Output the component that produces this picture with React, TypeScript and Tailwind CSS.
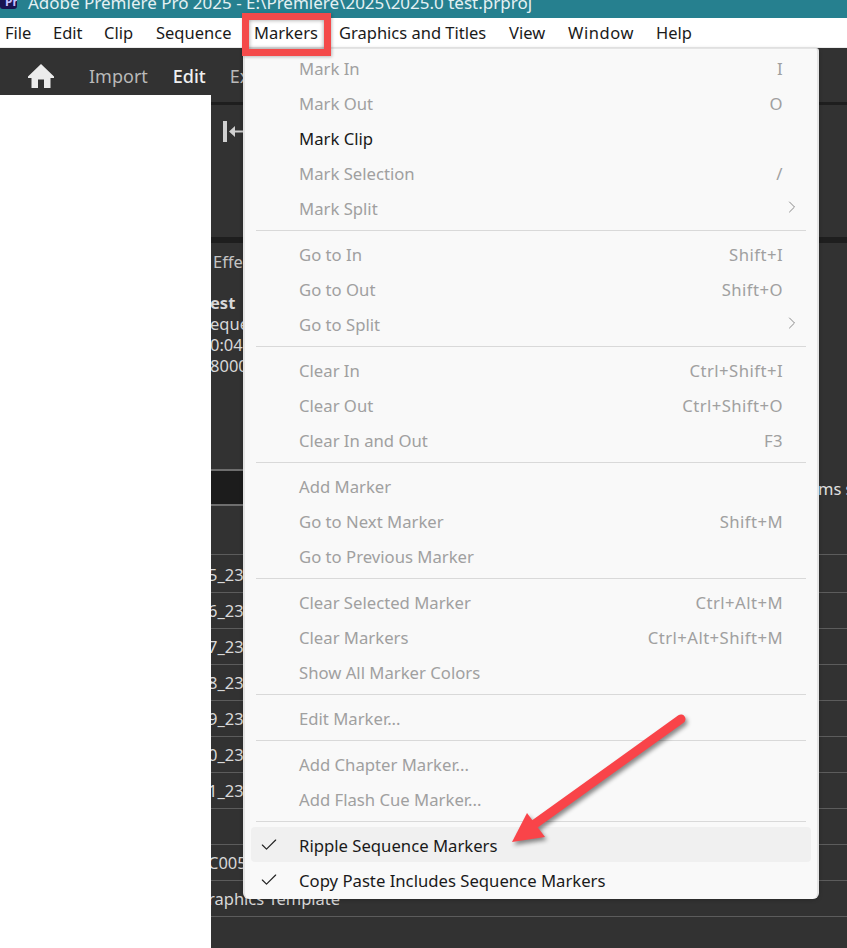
import { Check, ChevronRight } from 'lucide-react'

type Item = { label: string; shortcut?: string; sub?: boolean; on?: boolean }

const menuGroups: Item[][] = [
  [
    { label: 'Mark In', shortcut: 'I' },
    { label: 'Mark Out', shortcut: 'O' },
    { label: 'Mark Clip', on: true },
    { label: 'Mark Selection', shortcut: '/' },
    { label: 'Mark Split', sub: true },
  ],
  [
    { label: 'Go to In', shortcut: 'Shift+I' },
    { label: 'Go to Out', shortcut: 'Shift+O' },
    { label: 'Go to Split', sub: true },
  ],
  [
    { label: 'Clear In', shortcut: 'Ctrl+Shift+I' },
    { label: 'Clear Out', shortcut: 'Ctrl+Shift+O' },
    { label: 'Clear In and Out', shortcut: 'F3' },
  ],
  [
    { label: 'Add Marker' },
    { label: 'Go to Next Marker', shortcut: 'Shift+M' },
    { label: 'Go to Previous Marker' },
  ],
  [
    { label: 'Clear Selected Marker', shortcut: 'Ctrl+Alt+M' },
    { label: 'Clear Markers', shortcut: 'Ctrl+Alt+Shift+M' },
    { label: 'Show All Marker Colors' },
  ],
  [{ label: 'Edit Marker...' }],
  [{ label: 'Add Chapter Marker...' }, { label: 'Add Flash Cue Marker...' }],
]

const rows = ['5_23', '6_23', '7_23', '8_23', '9_23', '0_23', '1_23', '', 'C005', 'raphics Template']

function MenuRow({ item }: { item: Item }) {
  return (
    <div className={`h-[35px] flex items-center pl-[54px] pr-[34px] pb-[2px] ${item.on ? 'text-[#1a1a1a]' : 'text-[#a0a0a0]'}`}>
      <span>{item.label}</span>
      {item.shortcut && <span className="ml-auto tracking-[0.45px]">{item.shortcut}</span>}
      {item.sub && <ChevronRight className="ml-auto -mr-[19px] -mt-[3px] text-[#8a8a8a]" size={20} strokeWidth={1.2} />}
    </div>
  )
}

function CheckedRow({ label, hover }: { label: string; hover?: boolean }) {
  return (
    <div className={`h-[35px] flex items-center pt-[3px] mx-[6px] pl-[8px] rounded-[4px] text-[#1a1a1a] ${hover ? 'bg-[#f0f0f0]' : ''}`}>
      <Check size={20} strokeWidth={1.4} className="text-[#222] -mt-[3px]" />
      <span className="ml-[20px]">{label}</span>
    </div>
  )
}

function Menu() {
  return (
    <div className="absolute z-20 left-[243px] top-[48px] w-[576px] h-[851px] pt-[3px] bg-[#f9f9f9] border-t border-x-2 border-[#e4e4e4] rounded-b-[6px] rounded-tr-[3px] text-[16.7px] shadow-[0_1px_4px_rgba(0,0,0,0.2)]">
      {menuGroups.map((group, i) => (
        <div key={i}>
          {group.map((item) => (
            <MenuRow key={item.label} item={item} />
          ))}
          {/* separators are 11px, the last one is a bit tighter */}
          <div className={`${i === menuGroups.length - 1 ? 'h-[9px]' : 'h-[11px]'} flex items-start pt-[3px]`}>
            <div className="ml-[11px] h-px w-[550px] bg-[#d9d9d9]" />
          </div>
        </div>
      ))}
      <CheckedRow label="Ripple Sequence Markers" hover />
      <CheckedRow label="Copy Paste Includes Sequence Markers" />
    </div>
  )
}

function BehindPanel() {
  return (
    <div className="flex-1 flex flex-col overflow-hidden text-[#d8d8d8] text-[16.5px] leading-[21px]">
      <div className="h-[7px] shrink-0" />
      <div className="h-[3px] shrink-0 bg-[#1e1e1e]" />
      <div className="h-[132px] shrink-0 pl-[12px] pt-[16px]">
        <svg width="22" height="21" viewBox="0 0 22 21" fill="#d0d0d0">
          <rect x="0" y="0" width="4" height="21" />
          <path d="M6 10.5L12 5V9.5H22V11.5H12V16Z" />
        </svg>
      </div>
      <div className="h-[6px] shrink-0 bg-[#1e1e1e]" />
      <div className="h-[226px] shrink-0 pt-[8px] pl-[2px]">
        <div className="text-[#c4c4c4]">Effects</div>
        <div className="mt-[20px] -ml-[3px] font-bold">est</div>
        <div className="-ml-[3px]">equence</div>
        <div className="-ml-[3px]">0:04</div>
        <div className="-ml-[3px]">8000</div>
      </div>
      {/* the dark header strip only shows left of the menu */}
      <div className="h-[37px] shrink-0 flex">
        <div className="w-[40px] bg-[#1c1c1c] border-y-2 border-[#6e6e6e]" />
        <span className="ml-auto w-[29px] pt-[9px] shrink-0 whitespace-nowrap overflow-hidden text-[#e0e0e0]">ms s</span>
      </div>
      <div className="h-[49px] shrink-0 border-b border-[#5c5c5c]" />
      <div className="h-[38px] shrink-0 border-b border-[#5c5c5c] flex items-center -ml-[3px] pt-[2px]">{rows[0]}</div>
      {rows.slice(1).map((r, i) => (
        <div
          key={i}
          className="h-[36px] shrink-0 border-b border-[#5c5c5c] flex items-center -ml-[3px] whitespace-nowrap"
        >
          {r}
        </div>
      ))}
    </div>
  )
}

export default function App() {
  return (
    <div
      className="relative w-[847px] h-[948px] overflow-hidden bg-[#323232] flex flex-col"
      style={{ fontFamily: '"Noto Sans", sans-serif' }}
    >
      <div className="h-[18px] shrink-0 bg-[#26808f] flex items-end overflow-hidden text-[#e4f1f3] text-[17px] leading-[24px]">
        <div className="self-start w-[17px] h-[9px] pl-[5px] bg-[#1a1452] rounded-b-[3px] shrink-0 overflow-hidden text-[12px] leading-[4px] text-[#c5bfff] font-bold">
          Pr
        </div>
        <span className="ml-[11px] mb-[3px] whitespace-nowrap">Adobe Premiere Pro 2025 - E:\Premiere\2025\2025.0 test.prproj</span>
      </div>

      <div className="h-[30px] shrink-0 bg-white border-b border-[#ececec] flex items-center pl-[5px] pt-[1px] text-[16.5px] text-[#1a1a1a]">
        <span className="w-[48px]">File</span>
        <span className="w-[51px]">Edit</span>
        <span className="w-[52px]">Clip</span>
        <span className="w-[98px]">Sequence</span>
        <span className="w-[85px]">Markers</span>
        <span className="w-[170px]">Graphics and Titles</span>
        <span className="w-[59px]">View</span>
        <span className="w-[88px] tracking-[0.6px]">Window</span>
        <span>Help</span>
      </div>

      <div className="h-[47px] shrink-0 flex items-center pl-[28px] pt-[10px] text-[18px] text-[#b9b9b9]">
        <svg className="-mt-[2px]" width="26" height="24" viewBox="0 0 26 24" fill="#ececec">
          <path d="M13 0L26 12.5V14H22.5V24H16V15.5H10V24H3.5V14H0V12.5Z" />
        </svg>
        <span className="ml-[35px]">Import</span>
        <span className="ml-[25px] font-medium text-[#f0f0f0]">Edit</span>
        <span className="ml-[24px]">Export</span>
      </div>

      <div className="flex-1 min-h-0 flex">
        <div className="w-[211px] shrink-0 bg-white z-10" />
        <BehindPanel />
      </div>

      <Menu />

      {/* red callouts pasted on top of the screenshot */}
      <div className="absolute z-30 left-[242px] top-[13px] w-[89px] h-[43px] border-[7px] border-[#f44a4a] shadow-[inset_0_0_4px_rgba(0,0,0,0.4),1px_1px_3px_rgba(0,0,0,0.25)]" />
      <svg className="absolute z-30 left-0 top-0 drop-shadow-[2px_3px_2px_rgba(0,0,0,0.45)]" width="847" height="948" fill="none">
        <path d="M681 719L532 826" stroke="#f94449" strokeWidth="9" strokeLinecap="round" />
        <path d="M512 842L527 813L545 837Z" fill="#f94449" />
      </svg>
    </div>
  )
}
